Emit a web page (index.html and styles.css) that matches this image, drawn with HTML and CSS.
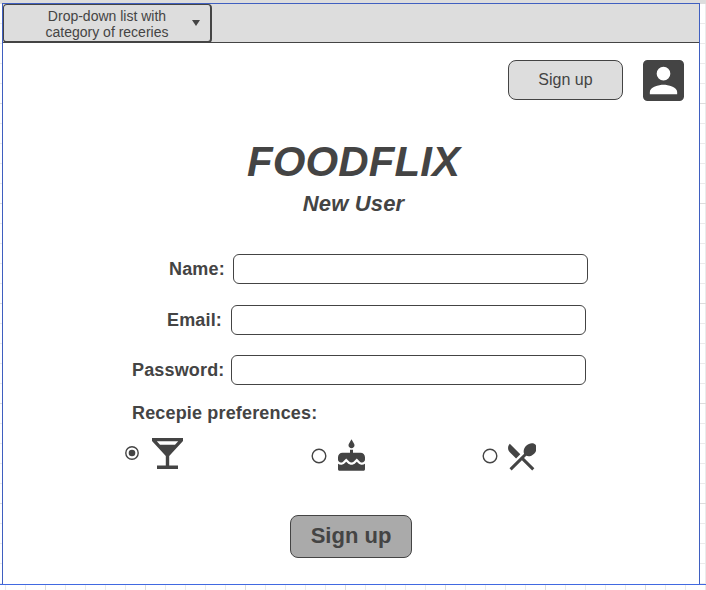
FILE: index.html
```html
<!DOCTYPE html>
<html lang="en">
<head>
<meta charset="utf-8">
<title>Foodflix</title>
<link rel="stylesheet" href="styles.css">
</head>
<body>
<div class="strip"></div>
<main class="frame">
  <header class="bar">
    <div class="dropdown">
      <span class="dropdown-text">Drop-down list with<br>category of receries</span>
      <svg class="caret" viewBox="0 0 8 6"><path d="M0 0h8L4 6z"/></svg>
    </div>
  </header>
  <div class="account">
    <button class="signup-small">Sign up</button>
    <svg class="avatar" viewBox="3 3 18 18"><path d="M3 5v14a2 2 0 0 0 2 2h14a2 2 0 0 0 2-2V5a2 2 0 0 0-2-2H5a2 2 0 0 0-2 2zm12 4a3 3 0 1 1-6 0 3 3 0 0 1 6 0zm-9 8c0-2 4-3.100 6-3.100s6 1.100 6 3.100v1H6v-1z"/></svg>
  </div>
  <h1>FOODFLIX</h1>
  <h2>New User</h2>
  <form class="form">
    <div class="row name"><label for="name">Name:</label><input id="name"></div>
    <div class="row email"><label for="email">Email:</label><input id="email"></div>
    <div class="row password"><label for="password">Password:</label><input id="password" type="password"></div>
    <p class="pref-title">Recepie preferences:</p>
    <div class="prefs">
      <div class="pref drinks">
        <svg class="radio-on" viewBox="0 0 14 14"><circle class="ring" cx="7" cy="7" r="6.200"/><circle cx="7" cy="7" r="3.300"/></svg>
        <svg class="glass" viewBox="0 0 31 31"><path fill-rule="evenodd" d="M0 0h31v3L17.200 18v9.500H26V31H5v-3.500h8.800V18L0 3zM4.800 3.200L8 6.800h15l3.200-3.600z"/></svg>
      </div>
      <div class="pref desserts">
        <svg class="radio" viewBox="0 0 16 16"><circle class="ring" cx="8" cy="8" r="6.800"/></svg>
        <svg class="cake" viewBox="3 0 18 21"><path d="M12 6c1.110 0 2-.9 2-2 0-.38-.1-.73-.29-1.030L12 0l-1.710 2.970c-.19.3-.29.65-.29 1.030 0 1.100.9 2 2 2zm4.600 9.990l-1.070-1.070-1.080 1.070c-1.300 1.300-3.580 1.310-4.890 0l-1.070-1.070-1.090 1.070C6.750 16.640 5.880 17 4.960 17c-.73 0-1.400-.23-1.960-.61V20c0 .55.45 1 1 1h16c.55 0 1-.45 1-1v-3.610c-.56.38-1.230.61-1.960.61-.92 0-1.790-.36-2.440-1.010zM18 9h-5V7h-2v2H6c-1.660 0-3 1.340-3 3v1.540c0 1.080.88 1.960 1.960 1.960.52 0 1.020-.2 1.380-.57l2.140-2.130 2.130 2.130c.74.74 2.030.74 2.770 0l2.140-2.130 2.130 2.130c.37.37.86.57 1.380.57 1.080 0 1.960-.88 1.960-1.960V12C21 10.340 19.660 9 18 9z"/></svg>
      </div>
      <div class="pref meals">
        <svg class="radio" viewBox="0 0 16 16"><circle class="ring" cx="8" cy="8" r="6.800"/></svg>
        <svg class="cutlery" viewBox="2.700 3 18.700 18.300"><path d="M8.100 13.340l2.830-2.830L3.910 3.500c-1.560 1.560-1.560 4.090 0 5.660l4.190 4.180zm6.780-1.810c1.530.71 3.680.21 5.270-1.380 1.910-1.910 2.280-4.650.81-6.120-1.460-1.460-4.200-1.100-6.120.81-1.590 1.590-2.090 3.740-1.380 5.270L3.700 19.870l1.410 1.410L12 14.410l6.880 6.880 1.410-1.410L13.410 13l1.470-1.470z"/></svg>
      </div>
    </div>
    <button class="signup" type="button">Sign up</button>
  </form>
</main>
</body>
</html>
```
FILE: styles.css
```css
* { box-sizing: border-box; }
body {
  margin: 0;
  height: 590px;
  overflow: hidden;
  color: #444;
  font-family: "Liberation Sans", Arial, sans-serif;
  background-color: #fff;
  background-image:
    linear-gradient(90deg, #ddd 1px, transparent 1px),
    linear-gradient(#ddd 1px, transparent 1px),
    linear-gradient(90deg, #ebebeb 1px, transparent 1px),
    linear-gradient(#ebebeb 1px, transparent 1px);
  background-size: 100px 100px, 100px 100px, 20px 20px, 20px 20px;
  background-position: 45px 3px, 45px 3px, 5px 3px, 5px 3px;
}
svg { display: block; flex: none; fill: #444; }
.strip { height: 3px; background: #ddd; }
.frame {
  display: flex;
  flex-direction: column;
  height: 582px;
  padding: 0 6px 0 2px;
  border-bottom: 1px solid #4169e1;
  background:
    linear-gradient(#3f5fc0, #3f5fc0) 2px 0 / 1px 100% no-repeat,
    linear-gradient(#3f5fc0, #3f5fc0) 699px 0 / 1px 100% no-repeat,
    linear-gradient(#fff, #fff) 2px 0 / 698px 100% no-repeat;
}
.bar {
  height: 40px;
  margin: 0 1px;
  background: #ddd;
  border-top: 1px solid #3f5fc0;
  border-bottom: 1px solid #444;
}
.dropdown {
  display: flex;
  align-items: center;
  width: 209px;
  height: 39px;
  border: solid #444;
  border-width: 1px 2px 2px 1px;
  border-radius: 4px;
}
.dropdown-text {
  width: 192px;
  padding-left: 14px;
  margin-top: 1px;
  font-size: 14px;
  line-height: 16px;
  text-align: center;
}
.caret { width: 8px; height: 6px; margin-left: -4px; }
.account {
  display: flex;
  align-items: flex-start;
  justify-content: flex-end;
  gap: 19.5px;
  height: 41px;
  margin-top: 16.5px;
  padding-right: 16.5px;
}
.signup-small, .signup {
  padding: 0;
  border: 1px solid #444;
  color: #444;
  font-family: inherit;
}
.signup-small {
  width: 115px;
  height: 40px;
  border-radius: 8px;
  background: #ddd;
  font-size: 16px;
}
.avatar { width: 41px; height: 41px; }
h1, h2 { margin: 0; font-style: italic; text-align: center; }
h1 { margin-top: 37.5px; margin-left: 5px; font-size: 42px; line-height: 48px; letter-spacing: 0.1px; }
h2 { margin-top: 5px; margin-left: 5px; font-size: 22px; line-height: 26px; letter-spacing: 0.15px; }
.form { display: flex; flex-direction: column; margin-top: 37px; }
.row { display: flex; align-items: center; height: 30px; }
.row label, .pref-title { font-size: 18px; font-weight: bold; letter-spacing: 0.16px; white-space: nowrap; }
.row input {
  width: 355px;
  height: 30px;
  padding: 0 8px;
  border: 1px solid #444;
  border-radius: 6px;
  background: #fff;
}
.name { padding-left: 167px; }
.name label { width: 64px; }
.email { margin-top: 21px; padding-left: 165px; }
.email label { width: 64px; }
.password { margin-top: 20px; padding-left: 130px; }
.password label { width: 99px; }
.pref-title { margin: 18px 0 0 130px; line-height: 20px; }
.prefs { display: flex; height: 36px; margin-top: 14px; padding-left: 123px; }
.pref { display: flex; }
.ring { fill: none; stroke: #444; stroke-width: 1.400; }
.drinks { width: 186px; gap: 13px; }
.desserts { width: 171px; gap: 11px; }
.meals { gap: 10px; }
.radio-on { width: 14px; height: 14px; margin-top: 9px; }
.radio { width: 16px; height: 16px; margin-top: 11px; }
.glass { width: 31px; height: 31px; margin-top: 1px; }
.cake { width: 27px; height: 32px; margin-top: 2px; }
.cutlery { width: 28px; height: 27.5px; margin-top: 6px; }
.signup {
  width: 122px;
  height: 43px;
  margin: 42px 0 0 288px;
  padding-bottom: 1px;
  border-radius: 8px;
  background: #aaa;
  font-size: 22px;
  font-weight: bold;
}
```
